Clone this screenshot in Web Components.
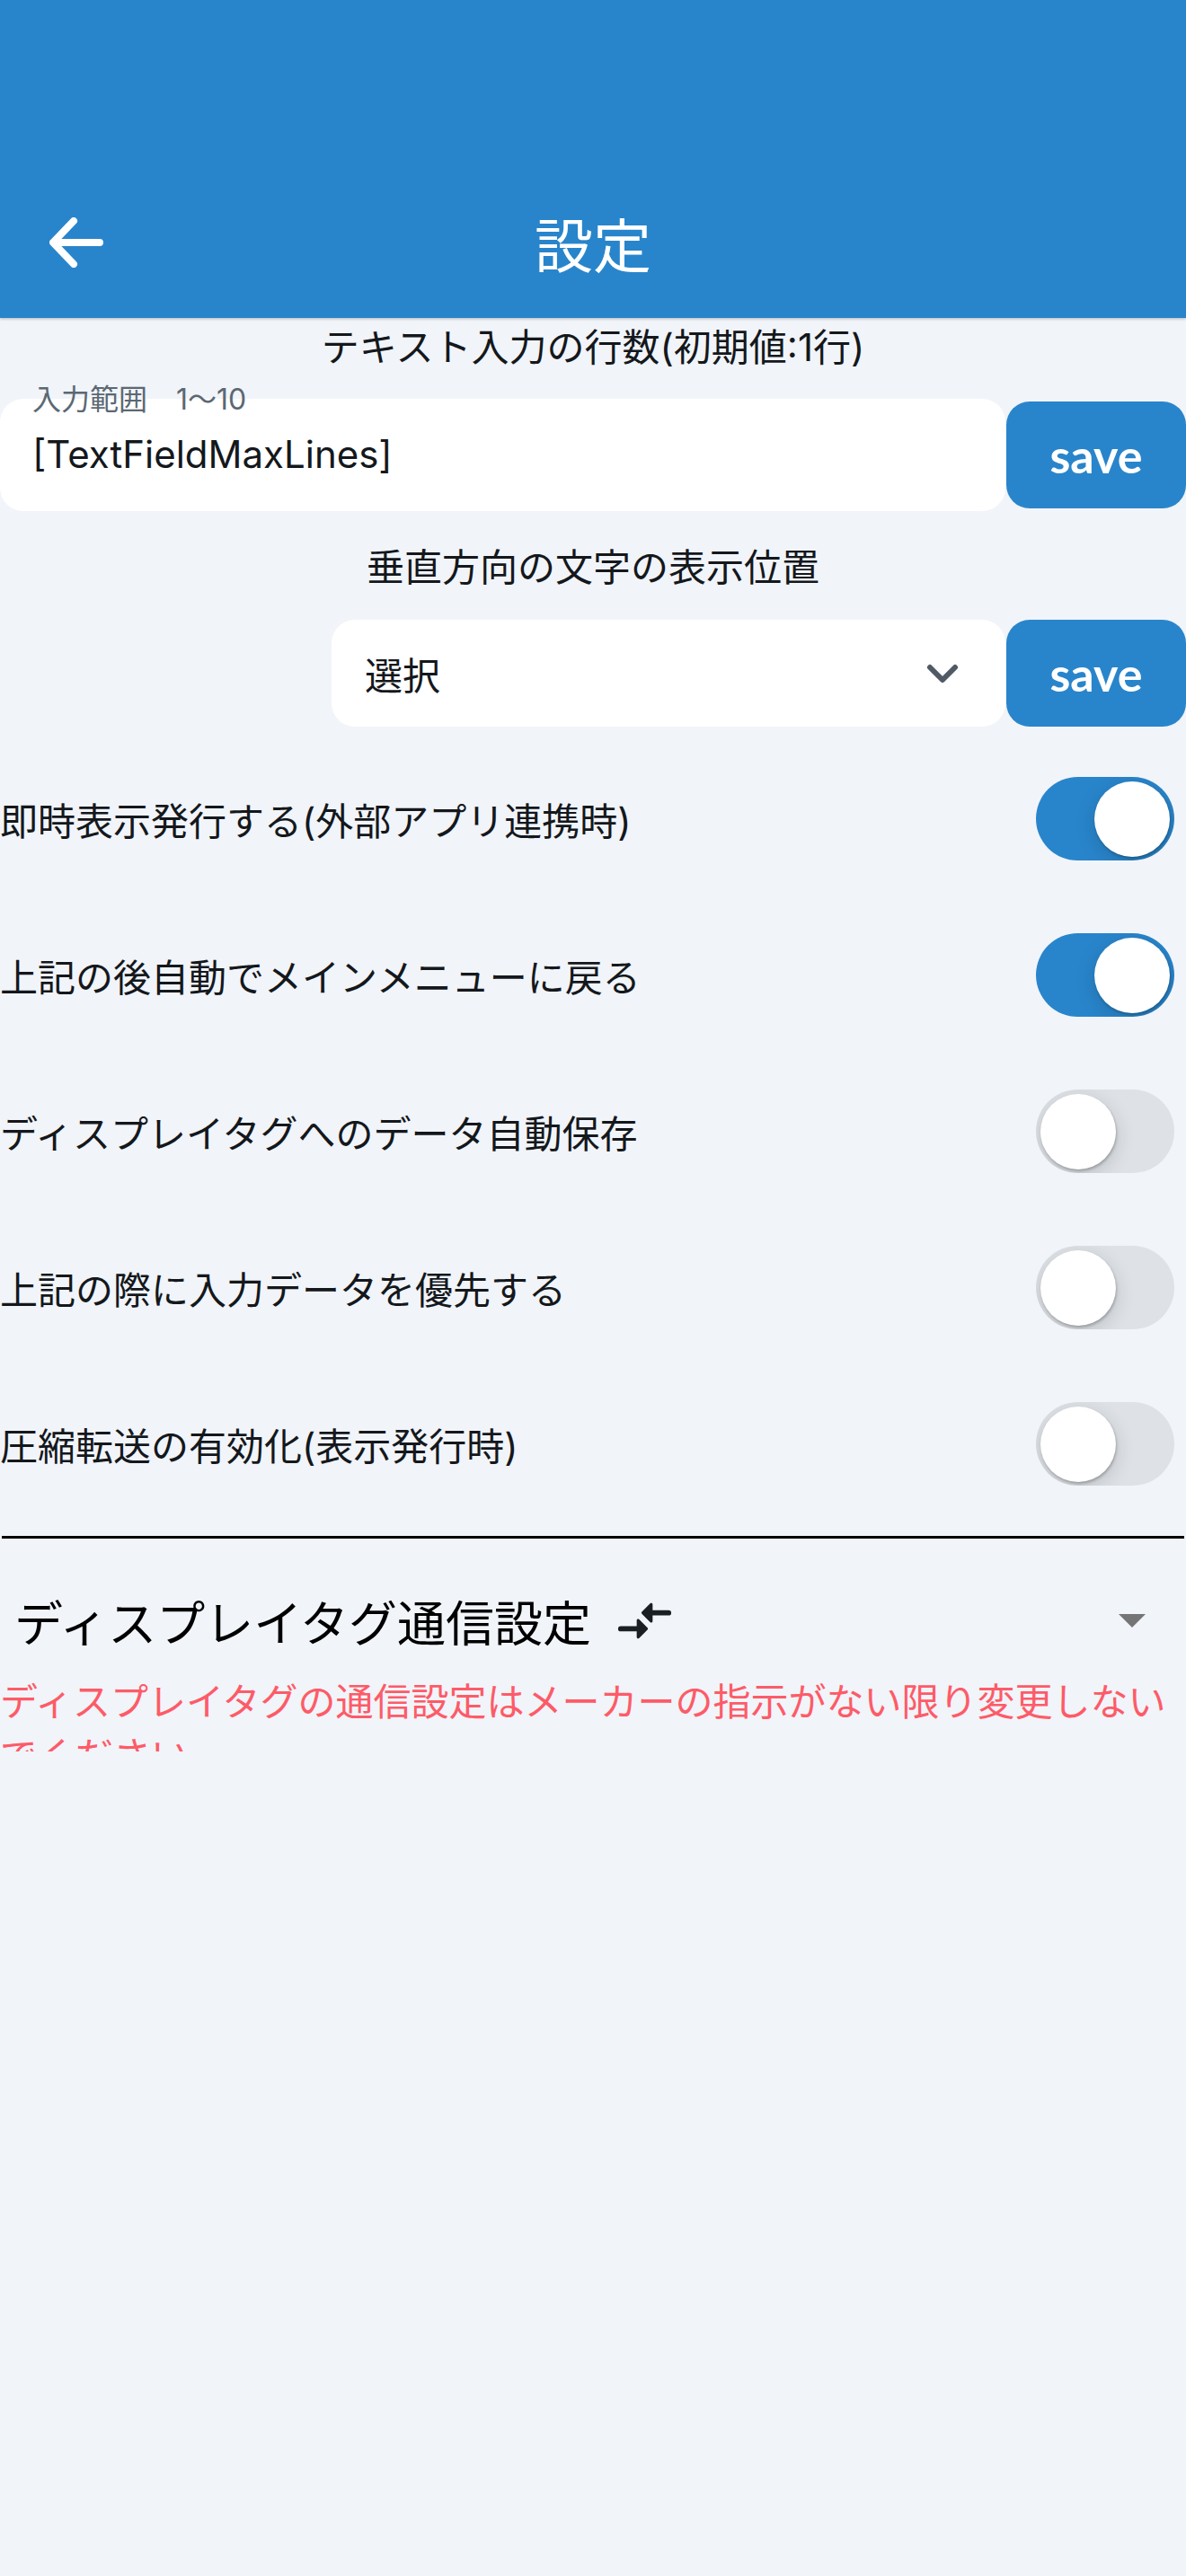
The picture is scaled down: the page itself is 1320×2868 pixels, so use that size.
<!DOCTYPE html>
<html lang="ja">
<head>
<meta charset="utf-8">
<title>設定</title>
<style>
  html, body { margin: 0; padding: 0; background: #f1f4f9; }
  body {
    width: 1320px;
    height: 2868px;
    overflow: hidden;
    font-family: "Inter", "Noto Sans CJK JP", "Noto Sans", sans-serif;
    color: #14181c;
  }
</style>
</head>
<body>
<settings-header>設定</settings-header>

<field-label height="90" line="65">テキスト入力の行数(初期値:1行)</field-label>
<form-row>
  <text-field hint="入力範囲　1〜10" value="[TextFieldMaxLines]"></text-field>
  <save-button>save</save-button>
</form-row>

<field-label height="118" line="126">垂直方向の文字の表示位置</field-label>
<form-row>
  <select-field value="選択"></select-field>
  <save-button>save</save-button>
</form-row>

<toggle-list>
  <toggle-row on>即時表示発行する(外部アプリ連携時)</toggle-row>
  <toggle-row on>上記の後自動でメインメニューに戻る</toggle-row>
  <toggle-row>ディスプレイタグへのデータ自動保存</toggle-row>
  <toggle-row>上記の際に入力データを優先する</toggle-row>
  <toggle-row>圧縮転送の有効化(表示発行時)</toggle-row>
</toggle-list>

<expand-section title-text="ディスプレイタグ通信設定">ディスプレイタグの通信設定はメーカーの指示がない限り変更しないでください。</expand-section>

<script>
class SettingsHeader extends HTMLElement {
  constructor() {
    super()
    const root = this.attachShadow({mode: 'open'})
    root.innerHTML = `
      <style>
        :host {
          display: flex;
          height: 354px;
          align-items: flex-end;
          justify-content: center;
          background: #2985cb;
          box-shadow: 0 1px 3px rgba(0,0,0,.25);
          color: #fff;
          position: relative;
        }
        .title { font-size: 65px; line-height: 158px; }
        svg { position: absolute; left: 55px; top: 242px; }
      </style>
      <svg width="60" height="56" viewBox="0 0 60 56" fill="none" stroke="#fff" stroke-width="8" stroke-linecap="round" stroke-linejoin="round">
        <path d="M27 4 4 28l23 24M5 28h51"/>
      </svg>
      <div class="title"><slot></slot></div>`
  }
}

class FieldLabel extends HTMLElement {
  constructor() {
    super()
    const root = this.attachShadow({mode: 'open'})
    root.innerHTML = `
      <style>
        :host { display: flex; justify-content: center; font-size: 42px; box-sizing: border-box; }
      </style>
      <slot></slot>`
  }
  connectedCallback() {
    this.style.height = this.getAttribute('height') + 'px'
    this.style.lineHeight = this.getAttribute('line') + 'px'
  }
}

class FormRow extends HTMLElement {
  constructor() {
    super()
    const root = this.attachShadow({mode: 'open'})
    root.innerHTML = `
      <style>
        :host { display: flex; justify-content: flex-end; align-items: center; height: 125px; }
      </style>
      <slot></slot>`
  }
}

class TextField extends HTMLElement {
  constructor() {
    super()
    const root = this.attachShadow({mode: 'open'})
    root.innerHTML = `
      <style>
        :host {
          display: flex;
          align-items: center;
          box-sizing: border-box;
          width: 1119px;
          height: 125px;
          padding: 0 36px;
          background: #fff;
          border-radius: 26px;
          position: relative;
          font-size: 42px;
        }
        .hint {
          position: absolute;
          left: 36px;
          top: -22px;
          line-height: 46px;
          font-size: 32px;
          color: #5b6873;
        }
        .value { margin-top: -2px; }
      </style>
      <span class="hint"></span>
      <span class="value"></span>`
    root.querySelector('.hint').textContent = this.getAttribute('hint')
    root.querySelector('.value').textContent = this.getAttribute('value')
  }
}

class SelectField extends HTMLElement {
  constructor() {
    super()
    const root = this.attachShadow({mode: 'open'})
    root.innerHTML = `
      <style>
        :host {
          display: flex;
          align-items: center;
          justify-content: space-between;
          box-sizing: border-box;
          width: 750px;
          height: 119px;
          padding: 0 52px 0 37px;
          background: #fff;
          border-radius: 26px;
          font-size: 42px;
        }
      </style>
      <span class="value"></span>
      <svg width="36" height="22" viewBox="0 0 36 22" fill="none" stroke="#505a64" stroke-width="6" stroke-linecap="round" stroke-linejoin="round">
        <path d="M4 4l14 14L32 4"/>
      </svg>`
    root.querySelector('.value').textContent = this.getAttribute('value')
  }
}

class SaveButton extends HTMLElement {
  constructor() {
    super()
    const root = this.attachShadow({mode: 'open'})
    root.innerHTML = `
      <style>
        :host {
          display: flex;
          align-items: center;
          justify-content: center;
          flex: none;
          width: 200px;
          height: 119px;
          margin-left: 1px;
          background: #2985cb;
          border-radius: 26px;
          color: #fff;
          font-family: "Lato", sans-serif;
          font-weight: 700;
          font-size: 52px;
        }
      </style>
      <slot></slot>`
  }
}

class ToggleList extends HTMLElement {
  constructor() {
    super()
    const root = this.attachShadow({mode: 'open'})
    root.innerHTML = `
      <style>
        :host { display: flex; flex-direction: column; padding-top: 12px; }
      </style>
      <slot></slot>`
  }
}

class ToggleRow extends HTMLElement {
  constructor() {
    super()
    const root = this.attachShadow({mode: 'open'})
    const on = this.hasAttribute('on')
    root.innerHTML = `
      <style>
        :host {
          display: flex;
          align-items: center;
          justify-content: space-between;
          height: 174px;
          padding-right: 13px;
          font-size: 42px;
        }
        .track {
          width: 154px;
          height: 93px;
          box-sizing: border-box;
          border-radius: 47px;
          padding: 5px 5px 4px;
          display: flex;
          overflow: hidden;
          background: ${on ? '#2985cb' : '#dee2e6'};
          justify-content: ${on ? 'flex-end' : 'flex-start'};
        }
        .knob {
          width: 84px;
          height: 84px;
          border-radius: 50%;
          background: #fff;
          box-shadow: 1px 2px 3px rgba(0,0,0,.22), 0 6px 22px rgba(0,0,0,.16);
        }
      </style>
      <span><slot></slot></span>
      <div class="track"><div class="knob"></div></div>`
  }
}

class ExpandSection extends HTMLElement {
  constructor() {
    super()
    const root = this.attachShadow({mode: 'open'})
    root.innerHTML = `
      <style>
        :host { display: block; padding-top: 16px; }
        hr { margin: 0 2px; height: 3px; border: 0; background: #000; }
        .head {
          display: flex;
          align-items: center;
          box-sizing: border-box;
          height: 147px;
          padding: 35px 45px 0 16px;
          color: #000;
          font-size: 54px;
        }
        .name { margin-right: 24px; }
        .icon { flex: none; }
        .caret { margin-left: auto; width: 0; height: 0; border: 15px solid transparent; border-top-color: #757575; border-bottom: 0; }
        .note {
          box-sizing: border-box;
          height: 90px;
          padding-top: 5px;
          overflow: hidden;
          color: #fd5b68;
          font-size: 42px;
          line-height: 60px;
        }
      </style>
      <hr>
      <div class="head">
        <span class="name"></span>
        <svg class="icon" width="71" height="71" viewBox="0 0 24 24" fill="#1a1f24">
          <path d="M9.01 14H3a1 1 0 0 0 0 2h6.01v2.2c0 .45.54.67.85.35l3.2-3.2a.5.5 0 0 0 0-.7l-3.2-3.2c-.31-.32-.85-.1-.85.35V14zm5.98-1.8V10H21a1 1 0 0 0 0-2h-6.01V5.8c0-.45-.54-.67-.85-.35l-3.2 3.2a.5.5 0 0 0 0 .7l3.2 3.2c.31.32.85.1.85-.35z"/>
        </svg>
        <span class="caret"></span>
      </div>
      <div class="note"><slot></slot></div>`
    root.querySelector('.name').textContent = this.getAttribute('title-text')
  }
}

customElements.define('settings-header', SettingsHeader)
customElements.define('field-label', FieldLabel)
customElements.define('form-row', FormRow)
customElements.define('text-field', TextField)
customElements.define('select-field', SelectField)
customElements.define('save-button', SaveButton)
customElements.define('toggle-list', ToggleList)
customElements.define('toggle-row', ToggleRow)
customElements.define('expand-section', ExpandSection)
</script>
</body>
</html>
